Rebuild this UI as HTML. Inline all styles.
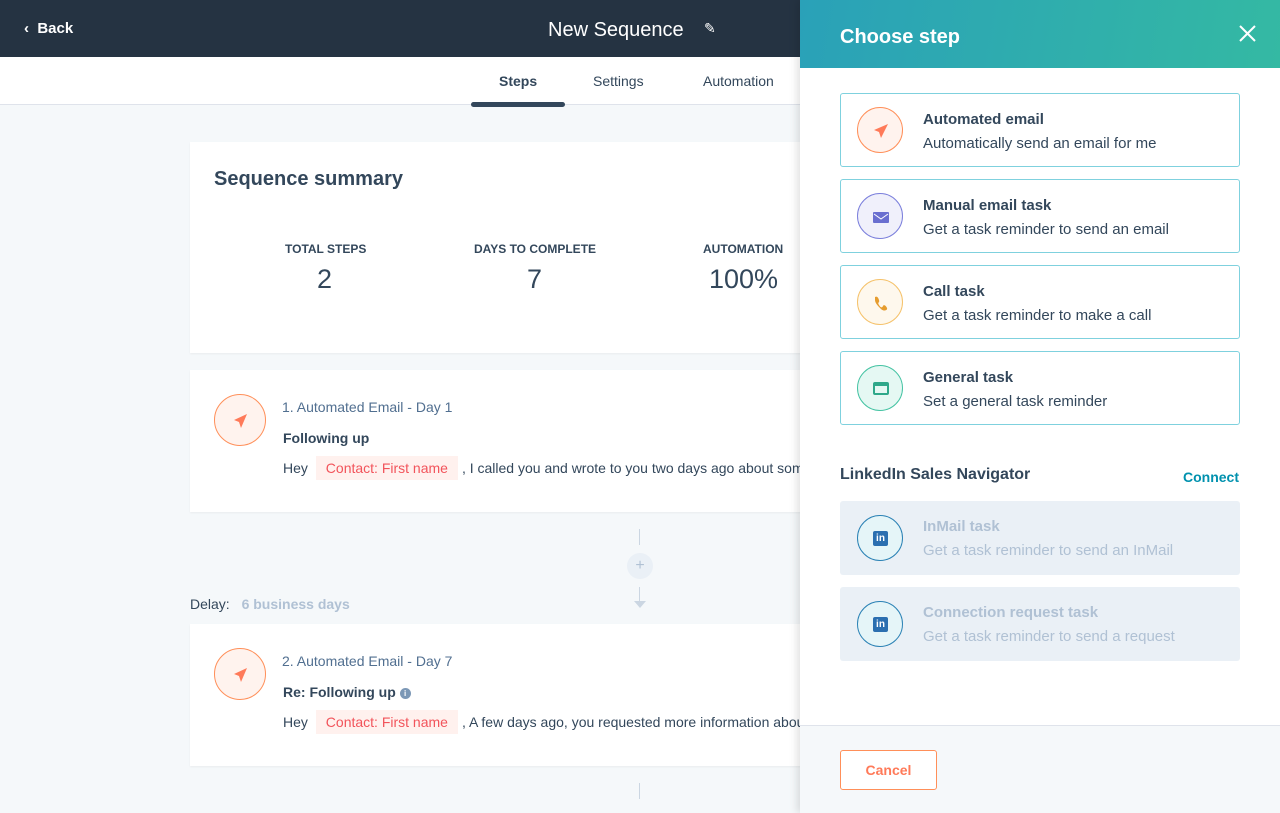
<!DOCTYPE html>
<html><head><meta charset="utf-8"><style>
*{box-sizing:border-box;margin:0;padding:0}
body{width:1280px;height:813px;overflow:hidden;background:#f5f8fa;font-family:"Liberation Sans",sans-serif;color:#33475b;position:relative}
.nav{position:absolute;left:0;top:0;width:1280px;height:57px;background:#253342;color:#fff}
.tabs{position:absolute;left:0;top:57px;width:1280px;height:48px;background:#fff;border-bottom:1px solid #dfe3eb}
.tab{position:absolute;top:16px;font-size:14px;color:#33475b}
.card{position:absolute;left:190px;width:640px;background:#fff;box-shadow:0 1px 2px rgba(0,0,0,.05)}
.circ{position:absolute;width:52px;height:52px;border-radius:50%;border:1px solid #ff8f59;background:#fff3ee}
.tok{display:inline-block;background:#fff1ee;color:#f2545b;padding:4px 10px;margin:0 4px}
.panel{position:absolute;left:800px;top:0;width:480px;height:813px;background:#fff;box-shadow:-3px 0 8px rgba(0,0,0,.12)}
.ph{height:68px;background:linear-gradient(100deg,#2aa1b8,#34b9a3);color:#fff}
.opt{position:absolute;left:40px;width:400px;height:74px;border:1px solid #7fd1de;border-radius:3px;background:#fff}
.opt .ic{position:absolute;left:16px;top:13px;width:46px;height:46px;border-radius:50%}
.opt .t{position:absolute;left:82px;top:17px;font-weight:bold;font-size:15px;color:#33475b}
.opt .d{position:absolute;left:82px;top:41px;font-size:15px;color:#33475b}
.dis{border:none;background:#eaf0f6}
.dis .ic{left:17px;top:14px}
.dis .t,.dis .d{color:#b0c1d4;left:83px}
.li{background:#e5f5f8;border:1px solid #2b82b5}
.li span{position:absolute;left:15px;top:15px;width:15px;height:15px;background:#2b6fb0;border-radius:2px;color:#fff;font-size:10px;font-weight:bold;text-align:center;line-height:15px}
</style></head><body>
<div class="nav">
<div style="position:absolute;left:24px;top:20px;font-size:15px;font-weight:bold">&#8249;&nbsp; Back</div>
<div style="position:absolute;left:548px;top:19px;font-size:20px">New Sequence</div>
<div style="position:absolute;left:704px;top:20px;font-size:14px">&#9998;</div>
</div>
<div class="tabs">
<div class="tab" style="left:499px;font-weight:bold">Steps</div>
<div class="tab" style="left:593px">Settings</div>
<div class="tab" style="left:703px">Automation</div>
<div style="position:absolute;left:471px;top:45px;width:94px;height:5px;border-radius:3px;background:#33475b"></div>
</div>
<div class="card" style="top:142px;height:211px">
<div style="position:absolute;left:24px;top:26px;font-size:20px;font-weight:bold">Sequence summary</div>
<div style="position:absolute;left:95px;top:100px;font-size:12px;font-weight:bold">TOTAL STEPS</div>
<div style="position:absolute;left:127px;top:122px;font-size:27px">2</div>
<div style="position:absolute;left:284px;top:100px;font-size:12px;font-weight:bold">DAYS TO COMPLETE</div>
<div style="position:absolute;left:337px;top:122px;font-size:27px">7</div>
<div style="position:absolute;left:513px;top:100px;font-size:12px;font-weight:bold">AUTOMATION</div>
<div style="position:absolute;left:519px;top:122px;font-size:27px">100%</div>
</div>
<div class="card" style="top:370px;height:142px">
<div class="circ" style="left:24px;top:24px"><svg width="52" height="52" viewBox="0 0 52 52"><path d="M32 19 L19 25 L24 27 L26 33 Z" fill="#ff7a59"/></svg></div>
<div style="position:absolute;left:92px;top:29px;font-size:14px;color:#516f90">1. Automated Email - Day 1</div>
<div style="position:absolute;left:93px;top:60px;font-size:14px;font-weight:bold">Following up</div>
<div style="position:absolute;left:93px;top:86px;font-size:14px;white-space:nowrap">Hey <span class="tok">Contact: First name</span>, I called you and wrote to you two days ago about something</div>
</div>
<div style="position:absolute;left:639px;top:529px;width:1px;height:16px;background:#cbd6e2"></div>
<div style="position:absolute;left:627px;top:553px;width:26px;height:26px;border-radius:50%;background:#eaf0f6;color:#b0c1d4;text-align:center;line-height:26px;font-size:16px">+</div>
<div style="position:absolute;left:639px;top:587px;width:1px;height:16px;background:#cbd6e2"></div>
<div style="position:absolute;left:634px;top:601px;width:0;height:0;border-left:6px solid transparent;border-right:6px solid transparent;border-top:7px solid #cbd6e2"></div>
<div style="position:absolute;left:190px;top:596px;font-size:14px">Delay: <span style="color:#b0c1d4;font-weight:bold;margin-left:8px">6 business days</span></div>
<div class="card" style="top:624px;height:142px">
<div class="circ" style="left:24px;top:24px"><svg width="52" height="52" viewBox="0 0 52 52"><path d="M32 19 L19 25 L24 27 L26 33 Z" fill="#ff7a59"/></svg></div>
<div style="position:absolute;left:92px;top:29px;font-size:14px;color:#516f90">2. Automated Email - Day 7</div>
<div style="position:absolute;left:93px;top:60px;font-size:14px;font-weight:bold">Re: Following up <span style="display:inline-block;width:11px;height:11px;border-radius:50%;background:#7c98b6;color:#fff;font-size:8px;text-align:center;line-height:11px;vertical-align:middle">i</span></div>
<div style="position:absolute;left:93px;top:86px;font-size:14px;white-space:nowrap">Hey <span class="tok">Contact: First name</span>, A few days ago, you requested more information about</div>
</div>
<div style="position:absolute;left:639px;top:783px;width:1px;height:16px;background:#cbd6e2"></div>
<div class="panel">
<div class="ph"><div style="position:absolute;left:40px;top:26px;font-size:20px;font-weight:bold">Choose step</div>
<svg style="position:absolute;left:439px;top:25px" width="17" height="17"><path d="M1 1L16 16M16 1L1 16" stroke="#fff" stroke-width="2"/></svg></div>
<div class="opt" style="top:93px"><div class="ic" style="background:#fff3ee;border:1px solid #ff8f59"><svg width="46" height="46"><path d="M30 16 L16 22 L21 24 L23 30 Z" fill="#ff7a59"/></svg></div><div class="t">Automated email</div><div class="d">Automatically send an email for me</div></div>
<div class="opt" style="top:179px"><div class="ic" style="background:#f0f0fb;border:1px solid #7b7fdc"><svg width="46" height="46"><rect x="15" y="18" width="16" height="11" rx="1" fill="#6a6fd0"/><path d="M16 20l7 5 7-5" stroke="#fff" fill="none"/></svg></div><div class="t">Manual email task</div><div class="d">Get a task reminder to send an email</div></div>
<div class="opt" style="top:265px"><div class="ic" style="background:#fef8ed;border:1px solid #f5c26b"><svg width="46" height="46"><path d="M17 17c2-1 3 0 4 3s-2 2 0 5 3 3 4 1 3 0 4 2-3 4-6 1-6-6-6-9z" fill="#e69d2f"/></svg></div><div class="t">Call task</div><div class="d">Get a task reminder to make a call</div></div>
<div class="opt" style="top:351px"><div class="ic" style="background:#e5f8f3;border:1px solid #45c3a3"><svg width="46" height="46"><rect x="16" y="17" width="14" height="11" rx="1" fill="none" stroke="#2fa88a" stroke-width="2"/><rect x="16" y="17" width="14" height="3" fill="#2fa88a"/></svg></div><div class="t">General task</div><div class="d">Set a general task reminder</div></div>
<div style="position:absolute;left:40px;top:466px;font-size:16px;font-weight:bold">LinkedIn Sales Navigator</div>
<div style="position:absolute;left:383px;top:469px;font-size:14px;font-weight:bold;color:#0091ae">Connect</div>
<div class="opt dis" style="top:501px"><div class="ic li"><span>in</span></div><div class="t">InMail task</div><div class="d">Get a task reminder to send an InMail</div></div>
<div class="opt dis" style="top:587px"><div class="ic li"><span>in</span></div><div class="t">Connection request task</div><div class="d">Get a task reminder to send a request</div></div>
<div style="position:absolute;left:0;top:725px;width:480px;height:88px;background:#f5f8fa;border-top:1px solid #dfe3eb"></div>
<div style="position:absolute;left:40px;top:750px;width:97px;height:40px;border:1px solid #ff8f59;border-radius:3px;background:#fff;color:#ff7a59;font-size:14px;font-weight:bold;text-align:center;line-height:38px">Cancel</div>
</div>
</body></html>
